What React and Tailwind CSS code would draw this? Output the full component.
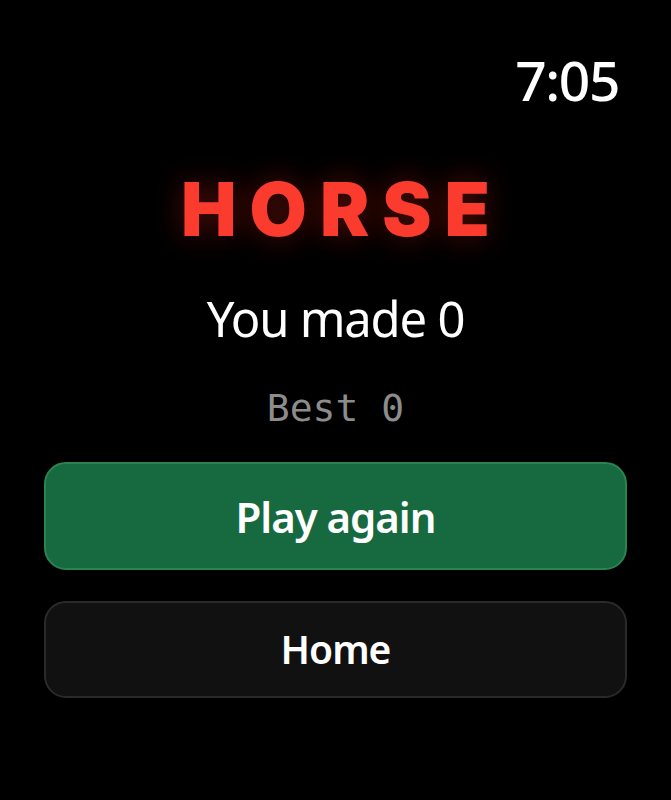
export default function App() {
  return (
    <div className="min-h-screen w-full bg-black text-white" style={{ fontFamily: '"Noto Sans", "Open Sans", sans-serif' }}>
      <div className="flex h-[800px] flex-col px-[44px]">
        <div className="flex justify-end pt-[50px] pr-[8px]">
          <span className="text-[55px] font-medium leading-[60px] tracking-tight">7:05</span>
        </div>
        <div className="mt-[62px] flex flex-col items-center">
          <h1
            className="text-[74px] font-black leading-[74px] tracking-[13px] text-[#fb3b2e] pl-[13px] [text-shadow:0_0_30px_rgba(255,40,20,0.35)]"
            style={{ fontFamily: 'Inter, "Noto Sans", sans-serif' }}
          >
            HORSE
          </h1>
          <p className="mt-[44px] text-[49px] leading-[56px] tracking-tight">You made 0</p>
          <p className="mt-[39px] text-[38px] leading-[46px] text-[#8c8c8c]" style={{ fontFamily: '"DejaVu Sans Mono", "Liberation Mono", monospace' }}>
            Best 0
          </p>
        </div>
        <button className="mt-[31px] flex h-[108px] w-full items-center justify-center rounded-[22px] border-2 border-[#2a8452] bg-[#176a3f] text-[42px] font-semibold tracking-tight">
          Play again
        </button>
        <button className="mt-[31px] flex h-[97px] w-full items-center justify-center rounded-[22px] border-2 border-[#2a2a2a] bg-[#111111] text-[39px] font-semibold tracking-tight">
          Home
        </button>
      </div>
    </div>
  )
}
